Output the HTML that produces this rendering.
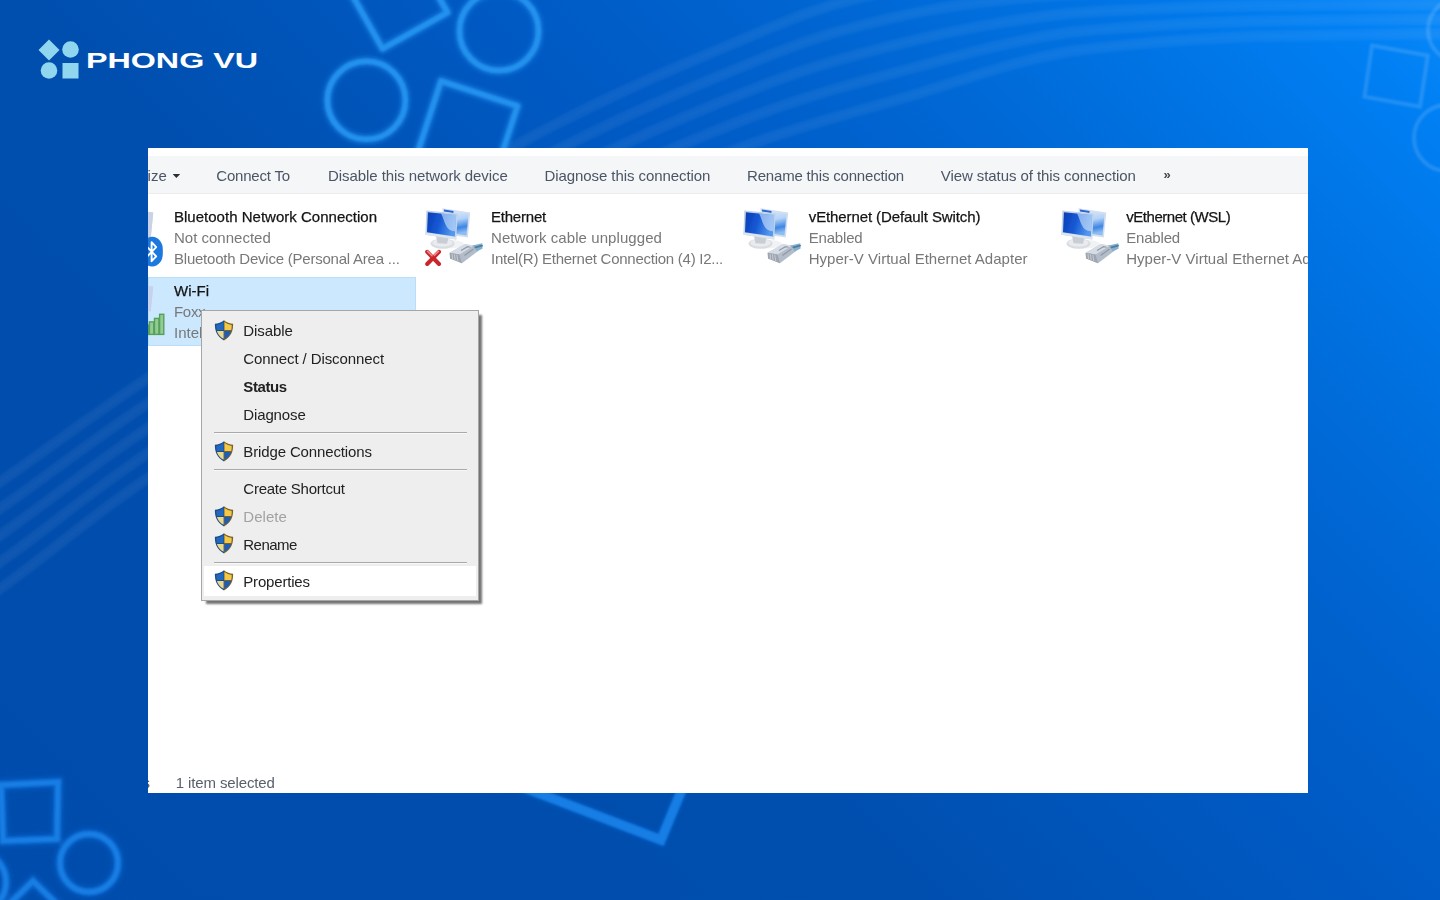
<!DOCTYPE html>
<html lang="en">
<head>
<meta charset="utf-8">
<title>Network Connections</title>
<style>
html,body{margin:0;padding:0;}
body{width:1440px;height:900px;overflow:hidden;position:relative;background:#0356bf;font-family:"Liberation Sans",sans-serif;}
#bg{position:absolute;left:0;top:0;width:1440px;height:900px;}
#logo{position:absolute;left:0;top:0;}
#win{position:absolute;left:148px;top:148px;width:1160px;height:645px;background:#fff;overflow:hidden;filter:blur(0.4px);}
#tb{position:absolute;left:0;top:8px;width:1160px;height:36.5px;background:#f5f6f7;border-bottom:1px solid #ececed;}
.t{position:absolute;white-space:pre;font-size:15px;line-height:18px;height:18px;}
.tb{color:#4a5566;top:19px;}
.nm{color:#141414;-webkit-text-stroke:0.25px #141414;}
.st{color:#787878;}
#sel{position:absolute;left:0;top:129px;width:268px;height:69px;background:#cce8ff;box-sizing:border-box;border:1px solid #b9defa;}
#menu{position:absolute;left:53px;top:162px;width:278px;height:291px;box-sizing:border-box;background:#eeeeee;border:1px solid #a6a6a6;box-shadow:4px 4px 2px -1px rgba(0,0,0,.55);}
.mi{position:absolute;left:41.3px;white-space:pre;font-size:15px;line-height:18px;color:#222;}
.sep{position:absolute;left:12px;width:253px;height:1px;background:#a9a9a9;border-bottom:1px solid #f8f8f8;}
.sh{position:absolute;left:11.7px;width:20px;height:21px;}
#hl{position:absolute;left:2px;top:255px;width:272px;height:30px;background:#fff;}
svg{display:block;}
</style>
</head>
<body>
<svg id="bg" width="1440" height="900" viewBox="0 0 1440 900">
<defs>
<linearGradient id="g1" gradientUnits="userSpaceOnUse" x1="0" y1="900" x2="1170" y2="-270">
<stop offset="0" stop-color="#004cac"/>
<stop offset="0.385" stop-color="#004eae"/>
<stop offset="0.449" stop-color="#0052b4"/>
<stop offset="0.615" stop-color="#005bc6"/>
<stop offset="0.716" stop-color="#0064d0"/>
<stop offset="0.838" stop-color="#0072e2"/>
<stop offset="0.95" stop-color="#0080f4"/>
<stop offset="1" stop-color="#0a88f8"/>
</linearGradient>
<filter id="glow" x="-30%" y="-30%" width="160%" height="160%"><feGaussianBlur stdDeviation="2.2"/></filter>
<filter id="soft" x="-30%" y="-30%" width="160%" height="160%"><feGaussianBlur stdDeviation="0.7"/></filter>
<filter id="soft2" x="-30%" y="-30%" width="160%" height="160%"><feGaussianBlur stdDeviation="1.1"/></filter>
<filter id="beam" x="-5%" y="-5%" width="110%" height="110%"><feGaussianBlur stdDeviation="1.5"/></filter>
</defs>
<rect width="1440" height="900" fill="url(#g1)"/>
<g fill="none" stroke="#fff" stroke-opacity="0.05" stroke-width="11" filter="url(#soft2)">
<path d="M-40 510.0L-10 489.0L20 467.9L50 446.5L80 425.1L110 403.9L140 383.4L170 363.3L200 343.3L230 323.3L260 303.4L290 283.6L320 264.1L350 244.8L380 225.8L410 207.2L440 189.0L470 171.4L500 154.3L530 137.8L560 122.0L590 107.0L620 92.7L650 79.0L680 65.9L710 53.2L740 40.6L770 27.8L800 15.8L830 5.5L860 -2.4L890 -9.4L920 -15.2L950 -19.2L980 -21.2L1010 -22.7L1040 -23.9L1070 -24.7L1100 -25.0L1130 -25.0L1160 -25.0L1190 -25.0L1220 -25.0L1250 -25.0L1280 -25.0L1310 -25.0L1340 -25.0L1370 -25.0L1400 -25.0L1430 -25.0L1460 -25.0"/>
<path d="M-40 536.8L-10 515.8L20 494.5L50 472.7L80 450.7L110 429.2L140 408.4L170 388.4L200 368.5L230 348.6L260 328.8L290 309.2L320 289.8L350 270.7L380 251.9L410 233.4L440 215.4L470 197.9L500 180.9L530 164.5L560 148.7L590 133.6L620 119.3L650 105.6L680 92.5L710 79.9L740 67.5L770 55.2L800 43.8L830 33.8L860 25.8L890 18.4L920 11.8L950 6.5L980 2.6L1010 -0.8L1040 -3.6L1070 -5.7L1100 -6.9L1130 -7.6L1160 -8.3L1190 -8.8L1220 -9.3L1250 -9.6L1280 -9.8L1310 -9.9L1340 -10.0L1370 -10.1L1400 -10.2L1430 -10.2L1460 -10.2"/>
<path d="M-40 563.5L-10 542.6L20 521.1L50 498.8L80 476.4L110 454.4L140 433.4L170 413.4L200 393.6L230 373.8L260 354.2L290 334.8L320 315.5L350 296.6L380 277.9L410 259.6L440 241.8L470 224.4L500 207.5L530 191.1L560 175.4L590 160.3L620 145.9L650 132.2L680 119.1L710 106.5L740 94.3L770 82.6L800 71.8L830 62.2L860 53.9L890 46.2L920 38.9L950 32.2L980 26.4L1010 21.2L1040 16.7L1070 13.3L1100 11.3L1130 9.8L1160 8.5L1190 7.3L1220 6.5L1250 5.8L1280 5.5L1310 5.2L1340 5.0L1370 4.8L1400 4.7L1430 4.6L1460 4.5"/>
<path d="M-40 590.2L-10 569.3L20 547.7L50 525.0L80 502.0L110 479.6L140 458.4L170 438.5L200 418.7L230 399.1L260 379.6L290 360.3L320 341.3L350 322.5L380 304.0L410 285.9L440 268.1L470 250.9L500 234.1L530 217.8L560 202.1L590 187.0L620 172.6L650 158.8L680 145.6L710 133.2L740 121.2L770 110.0L800 99.8L830 90.5L860 82.1L890 74.0L920 66.0L950 57.9L980 50.2L1010 43.1L1040 37.0L1070 32.3L1100 29.4L1130 27.2L1160 25.2L1190 23.5L1220 22.2L1250 21.2L1280 20.7L1310 20.3L1340 20.0L1370 19.7L1400 19.5L1430 19.4L1460 19.3"/>
<path d="M-40 617.0L-10 596.1L20 574.2L50 551.1L80 527.7L110 504.8L140 483.4L170 463.5L200 443.9L230 424.4L260 405.0L290 385.9L320 367.0L350 348.4L380 330.0L410 312.1L440 294.5L470 277.3L500 260.6L530 244.4L560 228.8L590 213.7L620 199.2L650 185.4L680 172.2L710 159.8L740 148.1L770 137.4L800 127.7L830 118.8L860 110.3L890 101.8L920 93.1L950 83.6L980 74.0L1010 65.0L1040 57.3L1070 51.3L1100 47.6L1130 44.6L1160 41.9L1190 39.7L1220 37.9L1250 36.6L1280 35.9L1310 35.4L1340 35.0L1370 34.6L1400 34.3L1430 34.1L1460 34.0"/>
</g>
<g fill="none" stroke="#fff" stroke-opacity="0.015" stroke-width="3" filter="url(#soft2)">
<path d="M-40 510.0L-10 489.0L20 467.9L50 446.5L80 425.1L110 403.9L140 383.4L170 363.3L200 343.3L230 323.3L260 303.4L290 283.6L320 264.1L350 244.8L380 225.8L410 207.2L440 189.0L470 171.4L500 154.3L530 137.8L560 122.0L590 107.0L620 92.7L650 79.0L680 65.9L710 53.2L740 40.6L770 27.8L800 15.8L830 5.5L860 -2.4L890 -9.4L920 -15.2L950 -19.2L980 -21.2L1010 -22.7L1040 -23.9L1070 -24.7L1100 -25.0L1130 -25.0L1160 -25.0L1190 -25.0L1220 -25.0L1250 -25.0L1280 -25.0L1310 -25.0L1340 -25.0L1370 -25.0L1400 -25.0L1430 -25.0L1460 -25.0"/>
<path d="M-40 536.8L-10 515.8L20 494.5L50 472.7L80 450.7L110 429.2L140 408.4L170 388.4L200 368.5L230 348.6L260 328.8L290 309.2L320 289.8L350 270.7L380 251.9L410 233.4L440 215.4L470 197.9L500 180.9L530 164.5L560 148.7L590 133.6L620 119.3L650 105.6L680 92.5L710 79.9L740 67.5L770 55.2L800 43.8L830 33.8L860 25.8L890 18.4L920 11.8L950 6.5L980 2.6L1010 -0.8L1040 -3.6L1070 -5.7L1100 -6.9L1130 -7.6L1160 -8.3L1190 -8.8L1220 -9.3L1250 -9.6L1280 -9.8L1310 -9.9L1340 -10.0L1370 -10.1L1400 -10.2L1430 -10.2L1460 -10.2"/>
<path d="M-40 563.5L-10 542.6L20 521.1L50 498.8L80 476.4L110 454.4L140 433.4L170 413.4L200 393.6L230 373.8L260 354.2L290 334.8L320 315.5L350 296.6L380 277.9L410 259.6L440 241.8L470 224.4L500 207.5L530 191.1L560 175.4L590 160.3L620 145.9L650 132.2L680 119.1L710 106.5L740 94.3L770 82.6L800 71.8L830 62.2L860 53.9L890 46.2L920 38.9L950 32.2L980 26.4L1010 21.2L1040 16.7L1070 13.3L1100 11.3L1130 9.8L1160 8.5L1190 7.3L1220 6.5L1250 5.8L1280 5.5L1310 5.2L1340 5.0L1370 4.8L1400 4.7L1430 4.6L1460 4.5"/>
<path d="M-40 590.2L-10 569.3L20 547.7L50 525.0L80 502.0L110 479.6L140 458.4L170 438.5L200 418.7L230 399.1L260 379.6L290 360.3L320 341.3L350 322.5L380 304.0L410 285.9L440 268.1L470 250.9L500 234.1L530 217.8L560 202.1L590 187.0L620 172.6L650 158.8L680 145.6L710 133.2L740 121.2L770 110.0L800 99.8L830 90.5L860 82.1L890 74.0L920 66.0L950 57.9L980 50.2L1010 43.1L1040 37.0L1070 32.3L1100 29.4L1130 27.2L1160 25.2L1190 23.5L1220 22.2L1250 21.2L1280 20.7L1310 20.3L1340 20.0L1370 19.7L1400 19.5L1430 19.4L1460 19.3"/>
<path d="M-40 617.0L-10 596.1L20 574.2L50 551.1L80 527.7L110 504.8L140 483.4L170 463.5L200 443.9L230 424.4L260 405.0L290 385.9L320 367.0L350 348.4L380 330.0L410 312.1L440 294.5L470 277.3L500 260.6L530 244.4L560 228.8L590 213.7L620 199.2L650 185.4L680 172.2L710 159.8L740 148.1L770 137.4L800 127.7L830 118.8L860 110.3L890 101.8L920 93.1L950 83.6L980 74.0L1010 65.0L1040 57.3L1070 51.3L1100 47.6L1130 44.6L1160 41.9L1190 39.7L1220 37.9L1250 36.6L1280 35.9L1310 35.4L1340 35.0L1370 34.6L1400 34.3L1430 34.1L1460 34.0"/>
</g>
<g id="shapesTL" fill="none" stroke-linejoin="round">
<g stroke="#1a80e4" stroke-width="10" stroke-opacity="0.6" filter="url(#glow)">
<path d="M382.5 48.75L447.5 12.5L411 -52L346 -16Z"/>
<circle cx="499" cy="31" r="39.5"/>
<circle cx="366.4" cy="100.3" r="39"/>
<path d="M441 81L517.5 106L492.5 182.5L416 157.5Z"/>
</g>
<g stroke="#2392ee" stroke-width="5.6" filter="url(#soft2)">
<path d="M382.5 48.75L447.5 12.5L411 -52L346 -16Z"/>
<circle cx="499" cy="31" r="39.5"/>
<circle cx="366.4" cy="100.3" r="39"/>
<path d="M441 81L517.5 106L492.5 182.5L416 157.5Z"/>
</g>
</g>
<g id="shapesBL" fill="none">
<g stroke="#1272dc" stroke-width="10" stroke-opacity="0.6" filter="url(#glow)">
<path d="M1 785L58 782L57 839L3 841Z"/>
<circle cx="89" cy="863" r="29"/>
<circle cx="-25" cy="882" r="31"/>
<path d="M-7 920L33 881L73 920"/>
<path d="M500 778.5L661 840L690 770"/>
</g>
<g stroke="#187ee4" stroke-width="5.4" filter="url(#soft2)">
<path d="M1 785L58 782L57 839L3 841Z"/>
<circle cx="89" cy="863" r="29"/>
<circle cx="-25" cy="882" r="31"/>
<path d="M-7 920L33 881L73 920"/>
</g>
<path d="M500 778.5L661 840L690 770" stroke="#187ee4" stroke-width="9" filter="url(#soft2)"/>
</g>
<g id="shapesR" fill="none" stroke="#cfe8ff" stroke-opacity="0.17" stroke-width="4" filter="url(#soft2)">
<path d="M1372 45.5L1427.8 55.5L1420 106.7L1364.4 96.7Z"/>
<circle cx="1447" cy="138" r="33"/>
<circle cx="1460" cy="30" r="32"/>
</g>
</svg>
<svg id="logo" width="300" height="100" viewBox="0 0 300 100">
<g fill="#8fd6ee">
<path d="M49 39.5L59.5 50L49 60.5L38.5 50Z"/>
<circle cx="70.5" cy="49.5" r="8.3"/>
<circle cx="49" cy="70.5" r="8.3"/>
<rect x="62.5" y="63" width="16" height="15.5"/>
</g>
<text x="86" y="67.5" font-family="'Liberation Sans',sans-serif" font-weight="bold" font-size="21.5" fill="#fff" textLength="172" lengthAdjust="spacingAndGlyphs">PHONG VU</text>
</svg>

<svg width="0" height="0" style="position:absolute"><defs><filter id="shf" x="-10%" y="-10%" width="120%" height="120%"><feGaussianBlur stdDeviation="0.5"/></filter></defs></svg>
<div id="win">
<div id="tb"></div>
<div class="t tb" style="left:-0.4px;top:18.5px;">ize</div>
<div style="position:absolute;left:24.6px;top:26px;width:7.6px;height:3.9px;background:#2b2f36;clip-path:polygon(0 0,100% 0,50% 100%);"></div>
<div class="t tb" style="left:68.30000000000001px;top:18.5px;letter-spacing:-0.21px;">Connect To</div>
<div class="t tb" style="left:180.10000000000002px;top:18.5px;letter-spacing:-0.08px;">Disable this network device</div>
<div class="t tb" style="left:396.4px;top:18.5px;letter-spacing:-0.067px;">Diagnose this connection</div>
<div class="t tb" style="left:599px;top:18.5px;letter-spacing:-0.18px;">Rename this connection</div>
<div class="t tb" style="left:792.8px;top:18.5px;letter-spacing:-0.078px;">View status of this connection</div>
<div class="t tb" style="left:1015.5px;top:18.0px;font-weight:bold;font-size:13px;color:#444;">»</div>
<div id="sel"></div>
<svg class="ic" style="position:absolute;left:-47.75px;top:52px" width="80" height="75" viewBox="0 0 80 75">
<defs>
<linearGradient id="i1a" x1="0" y1="0" x2="1" y2="0.25"><stop offset="0" stop-color="#0a3cb4"/><stop offset="0.5" stop-color="#1659d4"/><stop offset="1" stop-color="#5397ee"/></linearGradient>
<linearGradient id="i1b" x1="0" y1="0" x2="0.2" y2="1"><stop offset="0" stop-color="#dfecfb"/><stop offset="0.45" stop-color="#b4d3f7"/><stop offset="0.78" stop-color="#3f86e4"/><stop offset="1" stop-color="#8dbcf2"/></linearGradient>
<linearGradient id="i1c" x1="0" y1="0" x2="1" y2="1"><stop offset="0" stop-color="#c4ccd3"/><stop offset="1" stop-color="#8e9fae"/></linearGradient>
<filter id="i1f" x="-10%" y="-10%" width="120%" height="120%"><feGaussianBlur stdDeviation="0.7"/></filter>
</defs>
<g filter="url(#i1f)">
<path d="M25.4 8.3L53.3 12.5L50.8 37.5L27 34Z" fill="#d2dff0"/>
<path d="M27.4 10.3L51.6 14L49.5 35.5L28.6 32.2Z" fill="url(#i1b)"/>
<path d="M26.9 9.6L36.5 11L36.4 12.9L27 11.6Z" fill="#2a66d0"/>
<ellipse cx="31" cy="44.2" rx="16" ry="4.4" fill="#f1f2f4"/>
<ellipse cx="25.5" cy="43.6" rx="12" ry="5.2" fill="#d9dde1"/>
<ellipse cx="25.5" cy="42.8" rx="10.2" ry="3.8" fill="#e9ebee"/>
<path d="M19 36L31.5 38L30 43.8L20.5 43.2Z" fill="#c9ced4"/>
<path d="M9.3 10.4L40.7 13.4L39.2 39.4L8.4 34.7Z" fill="#c2d2e9"/>
<path d="M8.5 32.6L39.3 37.1L39.2 39.4L8.4 34.7Z" fill="#dde5ef"/>
<path d="M10.9 12.3L39.1 14.9L37.8 36.4L10 32.3Z" fill="url(#i1a)"/>
<path d="M24 13.5L39.1 14.9L38.1 31.2C34 31.4 31 29.6 29 25.6C27.2 22 26 17 24 13.5Z" fill="#d3e6fb" fill-opacity="0.6"/>
<path d="M45.5 11.4L53.3 12.5L50.8 37.5L45.5 36.7Z" fill="#ccd2e6"/>
<rect x="41.6" y="36.8" width="21.2" height="29.6" rx="10.4" ry="12.5" fill="#1b78de"/>
<path d="M46.6 46.3L56.2 56.3L51.6 61.2L51.6 42.2L56.2 47.1L46.6 57.1" stroke="#fff" stroke-width="1.9" stroke-linejoin="round" stroke-linecap="round" fill="none"/>
</g>
</svg>
<svg class="ic" style="position:absolute;left:269.25px;top:52px" width="80" height="75" viewBox="0 0 80 75">
<defs>
<linearGradient id="i2a" x1="0" y1="0" x2="1" y2="0.25"><stop offset="0" stop-color="#0a3cb4"/><stop offset="0.5" stop-color="#1659d4"/><stop offset="1" stop-color="#5397ee"/></linearGradient>
<linearGradient id="i2b" x1="0" y1="0" x2="0.2" y2="1"><stop offset="0" stop-color="#dfecfb"/><stop offset="0.45" stop-color="#b4d3f7"/><stop offset="0.78" stop-color="#3f86e4"/><stop offset="1" stop-color="#8dbcf2"/></linearGradient>
<linearGradient id="i2c" x1="0" y1="0" x2="1" y2="1"><stop offset="0" stop-color="#c4ccd3"/><stop offset="1" stop-color="#8e9fae"/></linearGradient>
<filter id="i2f" x="-10%" y="-10%" width="120%" height="120%"><feGaussianBlur stdDeviation="0.7"/></filter>
</defs>
<g filter="url(#i2f)">
<path d="M25.4 8.3L53.3 12.5L50.8 37.5L27 34Z" fill="#d2dff0"/>
<path d="M27.4 10.3L51.6 14L49.5 35.5L28.6 32.2Z" fill="url(#i2b)"/>
<path d="M26.9 9.6L36.5 11L36.4 12.9L27 11.6Z" fill="#2a66d0"/>
<ellipse cx="31" cy="44.2" rx="16" ry="4.4" fill="#f1f2f4"/>
<ellipse cx="25.5" cy="43.6" rx="12" ry="5.2" fill="#d9dde1"/>
<ellipse cx="25.5" cy="42.8" rx="10.2" ry="3.8" fill="#e9ebee"/>
<path d="M19 36L31.5 38L30 43.8L20.5 43.2Z" fill="#c9ced4"/>
<path d="M9.3 10.4L40.7 13.4L39.2 39.4L8.4 34.7Z" fill="#c2d2e9"/>
<path d="M8.5 32.6L39.3 37.1L39.2 39.4L8.4 34.7Z" fill="#dde5ef"/>
<path d="M10.9 12.3L39.1 14.9L37.8 36.4L10 32.3Z" fill="url(#i2a)"/>
<path d="M24 13.5L39.1 14.9L38.1 31.2C34 31.4 31 29.6 29 25.6C27.2 22 26 17 24 13.5Z" fill="#d3e6fb" fill-opacity="0.6"/>
<path d="M32.7 52.7L47.7 44.3L57 45.6L60.8 51.2L45 63.3L33 58.6Z" fill="#b3bdca"/>
<path d="M32.7 52.7L47.7 44.3L57 45.6L42.5 54.6Z" fill="#d6dce5"/>
<path d="M32.7 52.7L42.5 54.6L45 63.3L33 58.6Z" fill="#9ea5b0"/>
<path d="M35 53.8L35.6 59.4M37.4 54.3L38.2 60.4M39.8 54.8L40.8 61.4" stroke="#c9ced6" stroke-width="0.9" fill="none"/>
<path d="M44 50.5L50.5 46.7L53.5 47.2M47.5 55.5L56.5 49" stroke="#8d98a6" stroke-width="1.1" fill="none"/>
<path d="M55.5 45.5L65.3 43.2L65.6 48.6L60 51.4Z" fill="#86afcd"/>
<path d="M58.5 47.3L65 45.6" stroke="#4d7da1" stroke-width="1.8" stroke-linecap="round" fill="none"/><path d="M10.2 51.8L22 64M22 51.8L10.2 64" stroke="#c9252b" stroke-width="4" stroke-linecap="round" fill="none"/>
<path d="M10.5 51.3L15 55.8M21.5 51.3L17.5 55.3" stroke="#ef8c8c" stroke-width="1.6" stroke-linecap="round" fill="none"/>
</g>
</svg>
<svg class="ic" style="position:absolute;left:587.0px;top:52px" width="80" height="75" viewBox="0 0 80 75">
<defs>
<linearGradient id="i3a" x1="0" y1="0" x2="1" y2="0.25"><stop offset="0" stop-color="#0a3cb4"/><stop offset="0.5" stop-color="#1659d4"/><stop offset="1" stop-color="#5397ee"/></linearGradient>
<linearGradient id="i3b" x1="0" y1="0" x2="0.2" y2="1"><stop offset="0" stop-color="#dfecfb"/><stop offset="0.45" stop-color="#b4d3f7"/><stop offset="0.78" stop-color="#3f86e4"/><stop offset="1" stop-color="#8dbcf2"/></linearGradient>
<linearGradient id="i3c" x1="0" y1="0" x2="1" y2="1"><stop offset="0" stop-color="#c4ccd3"/><stop offset="1" stop-color="#8e9fae"/></linearGradient>
<filter id="i3f" x="-10%" y="-10%" width="120%" height="120%"><feGaussianBlur stdDeviation="0.7"/></filter>
</defs>
<g filter="url(#i3f)">
<path d="M25.4 8.3L53.3 12.5L50.8 37.5L27 34Z" fill="#d2dff0"/>
<path d="M27.4 10.3L51.6 14L49.5 35.5L28.6 32.2Z" fill="url(#i3b)"/>
<path d="M26.9 9.6L36.5 11L36.4 12.9L27 11.6Z" fill="#2a66d0"/>
<ellipse cx="31" cy="44.2" rx="16" ry="4.4" fill="#f1f2f4"/>
<ellipse cx="25.5" cy="43.6" rx="12" ry="5.2" fill="#d9dde1"/>
<ellipse cx="25.5" cy="42.8" rx="10.2" ry="3.8" fill="#e9ebee"/>
<path d="M19 36L31.5 38L30 43.8L20.5 43.2Z" fill="#c9ced4"/>
<path d="M9.3 10.4L40.7 13.4L39.2 39.4L8.4 34.7Z" fill="#c2d2e9"/>
<path d="M8.5 32.6L39.3 37.1L39.2 39.4L8.4 34.7Z" fill="#dde5ef"/>
<path d="M10.9 12.3L39.1 14.9L37.8 36.4L10 32.3Z" fill="url(#i3a)"/>
<path d="M24 13.5L39.1 14.9L38.1 31.2C34 31.4 31 29.6 29 25.6C27.2 22 26 17 24 13.5Z" fill="#d3e6fb" fill-opacity="0.6"/>
<path d="M32.7 52.7L47.7 44.3L57 45.6L60.8 51.2L45 63.3L33 58.6Z" fill="#b3bdca"/>
<path d="M32.7 52.7L47.7 44.3L57 45.6L42.5 54.6Z" fill="#d6dce5"/>
<path d="M32.7 52.7L42.5 54.6L45 63.3L33 58.6Z" fill="#9ea5b0"/>
<path d="M35 53.8L35.6 59.4M37.4 54.3L38.2 60.4M39.8 54.8L40.8 61.4" stroke="#c9ced6" stroke-width="0.9" fill="none"/>
<path d="M44 50.5L50.5 46.7L53.5 47.2M47.5 55.5L56.5 49" stroke="#8d98a6" stroke-width="1.1" fill="none"/>
<path d="M55.5 45.5L65.3 43.2L65.6 48.6L60 51.4Z" fill="#86afcd"/>
<path d="M58.5 47.3L65 45.6" stroke="#4d7da1" stroke-width="1.8" stroke-linecap="round" fill="none"/>
</g>
</svg>
<svg class="ic" style="position:absolute;left:904.5px;top:52px" width="80" height="75" viewBox="0 0 80 75">
<defs>
<linearGradient id="i4a" x1="0" y1="0" x2="1" y2="0.25"><stop offset="0" stop-color="#0a3cb4"/><stop offset="0.5" stop-color="#1659d4"/><stop offset="1" stop-color="#5397ee"/></linearGradient>
<linearGradient id="i4b" x1="0" y1="0" x2="0.2" y2="1"><stop offset="0" stop-color="#dfecfb"/><stop offset="0.45" stop-color="#b4d3f7"/><stop offset="0.78" stop-color="#3f86e4"/><stop offset="1" stop-color="#8dbcf2"/></linearGradient>
<linearGradient id="i4c" x1="0" y1="0" x2="1" y2="1"><stop offset="0" stop-color="#c4ccd3"/><stop offset="1" stop-color="#8e9fae"/></linearGradient>
<filter id="i4f" x="-10%" y="-10%" width="120%" height="120%"><feGaussianBlur stdDeviation="0.7"/></filter>
</defs>
<g filter="url(#i4f)">
<path d="M25.4 8.3L53.3 12.5L50.8 37.5L27 34Z" fill="#d2dff0"/>
<path d="M27.4 10.3L51.6 14L49.5 35.5L28.6 32.2Z" fill="url(#i4b)"/>
<path d="M26.9 9.6L36.5 11L36.4 12.9L27 11.6Z" fill="#2a66d0"/>
<ellipse cx="31" cy="44.2" rx="16" ry="4.4" fill="#f1f2f4"/>
<ellipse cx="25.5" cy="43.6" rx="12" ry="5.2" fill="#d9dde1"/>
<ellipse cx="25.5" cy="42.8" rx="10.2" ry="3.8" fill="#e9ebee"/>
<path d="M19 36L31.5 38L30 43.8L20.5 43.2Z" fill="#c9ced4"/>
<path d="M9.3 10.4L40.7 13.4L39.2 39.4L8.4 34.7Z" fill="#c2d2e9"/>
<path d="M8.5 32.6L39.3 37.1L39.2 39.4L8.4 34.7Z" fill="#dde5ef"/>
<path d="M10.9 12.3L39.1 14.9L37.8 36.4L10 32.3Z" fill="url(#i4a)"/>
<path d="M24 13.5L39.1 14.9L38.1 31.2C34 31.4 31 29.6 29 25.6C27.2 22 26 17 24 13.5Z" fill="#d3e6fb" fill-opacity="0.6"/>
<path d="M32.7 52.7L47.7 44.3L57 45.6L60.8 51.2L45 63.3L33 58.6Z" fill="#b3bdca"/>
<path d="M32.7 52.7L47.7 44.3L57 45.6L42.5 54.6Z" fill="#d6dce5"/>
<path d="M32.7 52.7L42.5 54.6L45 63.3L33 58.6Z" fill="#9ea5b0"/>
<path d="M35 53.8L35.6 59.4M37.4 54.3L38.2 60.4M39.8 54.8L40.8 61.4" stroke="#c9ced6" stroke-width="0.9" fill="none"/>
<path d="M44 50.5L50.5 46.7L53.5 47.2M47.5 55.5L56.5 49" stroke="#8d98a6" stroke-width="1.1" fill="none"/>
<path d="M55.5 45.5L65.3 43.2L65.6 48.6L60 51.4Z" fill="#86afcd"/>
<path d="M58.5 47.3L65 45.6" stroke="#4d7da1" stroke-width="1.8" stroke-linecap="round" fill="none"/>
</g>
</svg>
<svg class="ic" style="position:absolute;left:-47.75px;top:125.7px" width="80" height="75" viewBox="0 0 80 75">
<defs>
<linearGradient id="i5a" x1="0" y1="0" x2="1" y2="0.25"><stop offset="0" stop-color="#0a3cb4"/><stop offset="0.5" stop-color="#1659d4"/><stop offset="1" stop-color="#5397ee"/></linearGradient>
<linearGradient id="i5b" x1="0" y1="0" x2="0.2" y2="1"><stop offset="0" stop-color="#dfecfb"/><stop offset="0.45" stop-color="#b4d3f7"/><stop offset="0.78" stop-color="#3f86e4"/><stop offset="1" stop-color="#8dbcf2"/></linearGradient>
<linearGradient id="i5c" x1="0" y1="0" x2="1" y2="1"><stop offset="0" stop-color="#c4ccd3"/><stop offset="1" stop-color="#8e9fae"/></linearGradient>
<filter id="i5f" x="-10%" y="-10%" width="120%" height="120%"><feGaussianBlur stdDeviation="0.7"/></filter>
</defs>
<g filter="url(#i5f)">
<path d="M25.4 8.3L53.3 12.5L50.8 37.5L27 34Z" fill="#d2dff0"/>
<path d="M27.4 10.3L51.6 14L49.5 35.5L28.6 32.2Z" fill="url(#i5b)"/>
<path d="M26.9 9.6L36.5 11L36.4 12.9L27 11.6Z" fill="#2a66d0"/>
<ellipse cx="31" cy="44.2" rx="16" ry="4.4" fill="#f1f2f4"/>
<ellipse cx="25.5" cy="43.6" rx="12" ry="5.2" fill="#d9dde1"/>
<ellipse cx="25.5" cy="42.8" rx="10.2" ry="3.8" fill="#e9ebee"/>
<path d="M19 36L31.5 38L30 43.8L20.5 43.2Z" fill="#c9ced4"/>
<path d="M9.3 10.4L40.7 13.4L39.2 39.4L8.4 34.7Z" fill="#c2d2e9"/>
<path d="M8.5 32.6L39.3 37.1L39.2 39.4L8.4 34.7Z" fill="#dde5ef"/>
<path d="M10.9 12.3L39.1 14.9L37.8 36.4L10 32.3Z" fill="url(#i5a)"/>
<path d="M24 13.5L39.1 14.9L38.1 31.2C34 31.4 31 29.6 29 25.6C27.2 22 26 17 24 13.5Z" fill="#d3e6fb" fill-opacity="0.6"/>
<path d="M45.5 11.4L53.3 12.5L50.8 37.5L45.5 36.7Z" fill="#c6d2ec"/>
<g fill="#93cb95" stroke="#56a05a" stroke-width="1.4">
<rect x="44.3" y="51.2" width="4.4" height="9.2"/>
<rect x="49.4" y="47.9" width="4.4" height="12.5"/>
<rect x="54.5" y="44.4" width="4.4" height="16"/>
<rect x="59.6" y="40.3" width="4.2" height="20.1"/>
</g>
</g>
</svg>
<div class="t nm" style="left:26px;top:59.6px;letter-spacing:0.013px;">Bluetooth Network Connection</div>
<div class="t st" style="left:26px;top:81px;letter-spacing:0px;">Not connected</div>
<div class="t st" style="left:26px;top:101.8px;letter-spacing:-0.225px;">Bluetooth Device (Personal Area ...</div>
<div class="t nm" style="left:343px;top:59.6px;letter-spacing:-0.215px;">Ethernet</div>
<div class="t st" style="left:343px;top:81px;letter-spacing:0.075px;">Network cable unplugged</div>
<div class="t st" style="left:343px;top:101.8px;letter-spacing:-0.257px;">Intel(R) Ethernet Connection (4) I2...</div>
<div class="t nm" style="left:660.75px;top:59.6px;letter-spacing:-0.1px;">vEthernet (Default Switch)</div>
<div class="t st" style="left:660.75px;top:81px;letter-spacing:-0.19px;">Enabled</div>
<div class="t st" style="left:660.75px;top:101.8px;letter-spacing:0.018px;">Hyper-V Virtual Ethernet Adapter</div>
<div class="t nm" style="left:978.25px;top:59.6px;letter-spacing:-0.458px;">vEthernet (WSL)</div>
<div class="t st" style="left:978.25px;top:81px;letter-spacing:-0.19px;">Enabled</div>
<div class="t st" style="left:978.25px;top:101.8px;letter-spacing:0.018px;">Hyper-V Virtual Ethernet Adapter</div>
<div class="t nm" style="left:26px;top:134.4px;letter-spacing:0px;">Wi-Fi</div>
<div class="t st" style="left:26px;top:155.2px;letter-spacing:-0.3px;">Foxx</div>
<div class="t st" style="left:26px;top:175.7px;letter-spacing:0px;">Intel(R)</div>
<div class="t st" style="left:-5.6px;top:626px;color:#59606b;">s</div>
<div class="t st" style="left:27.80000000000001px;top:626px;letter-spacing:-0.126px;color:#59606b;">1 item selected</div>
<div id="menu">
<div id="hl"></div>
<div class="mi" style="top:10.6px;letter-spacing:-0.076px">Disable</div>
<svg class="sh" style="top:8.6px" width="20" height="21" viewBox="0 0 20 21"><g filter="url(#shf)"><path d="M10 0.3C7.5 2.4 4 3.6 0.9 3.8C0.7 10 2.5 16.5 10 20.4Z" fill="#1b4b88"/><path d="M10 0.3C12.5 2.4 16 3.6 19.1 3.8C19.3 10 17.5 16.5 10 20.4Z" fill="#7a6227"/><path d="M9.6 2.1C7.5 3.6 4.9 4.7 2.3 5C2.25 6.8 2.4 8.5 2.75 10.1L9.6 10.1Z" fill="#2467bd"/><path d="M10.5 2.1C12.5 3.6 15.1 4.7 17.7 5C17.75 6.8 17.6 8.5 17.25 10.1L10.5 10.1Z" fill="#f2c94c"/><path d="M2.9 10.9C3.8 14 5.8 16.8 9.6 18.8L9.6 10.9Z" fill="#ecd88a"/><path d="M17.1 10.9C16.2 14 14.2 16.8 10.5 18.8L10.5 10.9Z" fill="#1f5cba"/></g></svg>
<div class="mi" style="top:38.55px;letter-spacing:-0.094px">Connect / Disconnect</div>
<div class="mi" style="top:66.5px;letter-spacing:-0.4px"><b>Status</b></div>
<div class="mi" style="top:94.6px;letter-spacing:-0.136px">Diagnose</div>
<div class="mi" style="top:131.5px;letter-spacing:-0.135px">Bridge Connections</div>
<svg class="sh" style="top:129.5px" width="20" height="21" viewBox="0 0 20 21"><g filter="url(#shf)"><path d="M10 0.3C7.5 2.4 4 3.6 0.9 3.8C0.7 10 2.5 16.5 10 20.4Z" fill="#1b4b88"/><path d="M10 0.3C12.5 2.4 16 3.6 19.1 3.8C19.3 10 17.5 16.5 10 20.4Z" fill="#7a6227"/><path d="M9.6 2.1C7.5 3.6 4.9 4.7 2.3 5C2.25 6.8 2.4 8.5 2.75 10.1L9.6 10.1Z" fill="#2467bd"/><path d="M10.5 2.1C12.5 3.6 15.1 4.7 17.7 5C17.75 6.8 17.6 8.5 17.25 10.1L10.5 10.1Z" fill="#f2c94c"/><path d="M2.9 10.9C3.8 14 5.8 16.8 9.6 18.8L9.6 10.9Z" fill="#ecd88a"/><path d="M17.1 10.9C16.2 14 14.2 16.8 10.5 18.8L10.5 10.9Z" fill="#1f5cba"/></g></svg>
<div class="mi" style="top:168.55px;letter-spacing:-0.237px">Create Shortcut</div>
<div class="mi" style="top:196.5px;letter-spacing:0.04px;color:#a2a2a2">Delete</div>
<svg class="sh" style="top:194.5px" width="20" height="21" viewBox="0 0 20 21"><g filter="url(#shf)"><path d="M10 0.3C7.5 2.4 4 3.6 0.9 3.8C0.7 10 2.5 16.5 10 20.4Z" fill="#1b4b88"/><path d="M10 0.3C12.5 2.4 16 3.6 19.1 3.8C19.3 10 17.5 16.5 10 20.4Z" fill="#7a6227"/><path d="M9.6 2.1C7.5 3.6 4.9 4.7 2.3 5C2.25 6.8 2.4 8.5 2.75 10.1L9.6 10.1Z" fill="#2467bd"/><path d="M10.5 2.1C12.5 3.6 15.1 4.7 17.7 5C17.75 6.8 17.6 8.5 17.25 10.1L10.5 10.1Z" fill="#f2c94c"/><path d="M2.9 10.9C3.8 14 5.8 16.8 9.6 18.8L9.6 10.9Z" fill="#ecd88a"/><path d="M17.1 10.9C16.2 14 14.2 16.8 10.5 18.8L10.5 10.9Z" fill="#1f5cba"/></g></svg>
<div class="mi" style="top:224.6px;letter-spacing:-0.517px">Rename</div>
<svg class="sh" style="top:222.2px" width="20" height="21" viewBox="0 0 20 21"><g filter="url(#shf)"><path d="M10 0.3C7.5 2.4 4 3.6 0.9 3.8C0.7 10 2.5 16.5 10 20.4Z" fill="#1b4b88"/><path d="M10 0.3C12.5 2.4 16 3.6 19.1 3.8C19.3 10 17.5 16.5 10 20.4Z" fill="#7a6227"/><path d="M9.6 2.1C7.5 3.6 4.9 4.7 2.3 5C2.25 6.8 2.4 8.5 2.75 10.1L9.6 10.1Z" fill="#2467bd"/><path d="M10.5 2.1C12.5 3.6 15.1 4.7 17.7 5C17.75 6.8 17.6 8.5 17.25 10.1L10.5 10.1Z" fill="#f2c94c"/><path d="M2.9 10.9C3.8 14 5.8 16.8 9.6 18.8L9.6 10.9Z" fill="#ecd88a"/><path d="M17.1 10.9C16.2 14 14.2 16.8 10.5 18.8L10.5 10.9Z" fill="#1f5cba"/></g></svg>
<div class="mi" style="top:261.7px;letter-spacing:-0.188px">Properties</div>
<svg class="sh" style="top:259.3px" width="20" height="21" viewBox="0 0 20 21"><g filter="url(#shf)"><path d="M10 0.3C7.5 2.4 4 3.6 0.9 3.8C0.7 10 2.5 16.5 10 20.4Z" fill="#1b4b88"/><path d="M10 0.3C12.5 2.4 16 3.6 19.1 3.8C19.3 10 17.5 16.5 10 20.4Z" fill="#7a6227"/><path d="M9.6 2.1C7.5 3.6 4.9 4.7 2.3 5C2.25 6.8 2.4 8.5 2.75 10.1L9.6 10.1Z" fill="#2467bd"/><path d="M10.5 2.1C12.5 3.6 15.1 4.7 17.7 5C17.75 6.8 17.6 8.5 17.25 10.1L10.5 10.1Z" fill="#f2c94c"/><path d="M2.9 10.9C3.8 14 5.8 16.8 9.6 18.8L9.6 10.9Z" fill="#ecd88a"/><path d="M17.1 10.9C16.2 14 14.2 16.8 10.5 18.8L10.5 10.9Z" fill="#1f5cba"/></g></svg>
<div class="sep" style="top:120.8px"></div>
<div class="sep" style="top:158.1px"></div>
<div class="sep" style="top:250.8px"></div>
</div>
</div>
</body>
</html>
